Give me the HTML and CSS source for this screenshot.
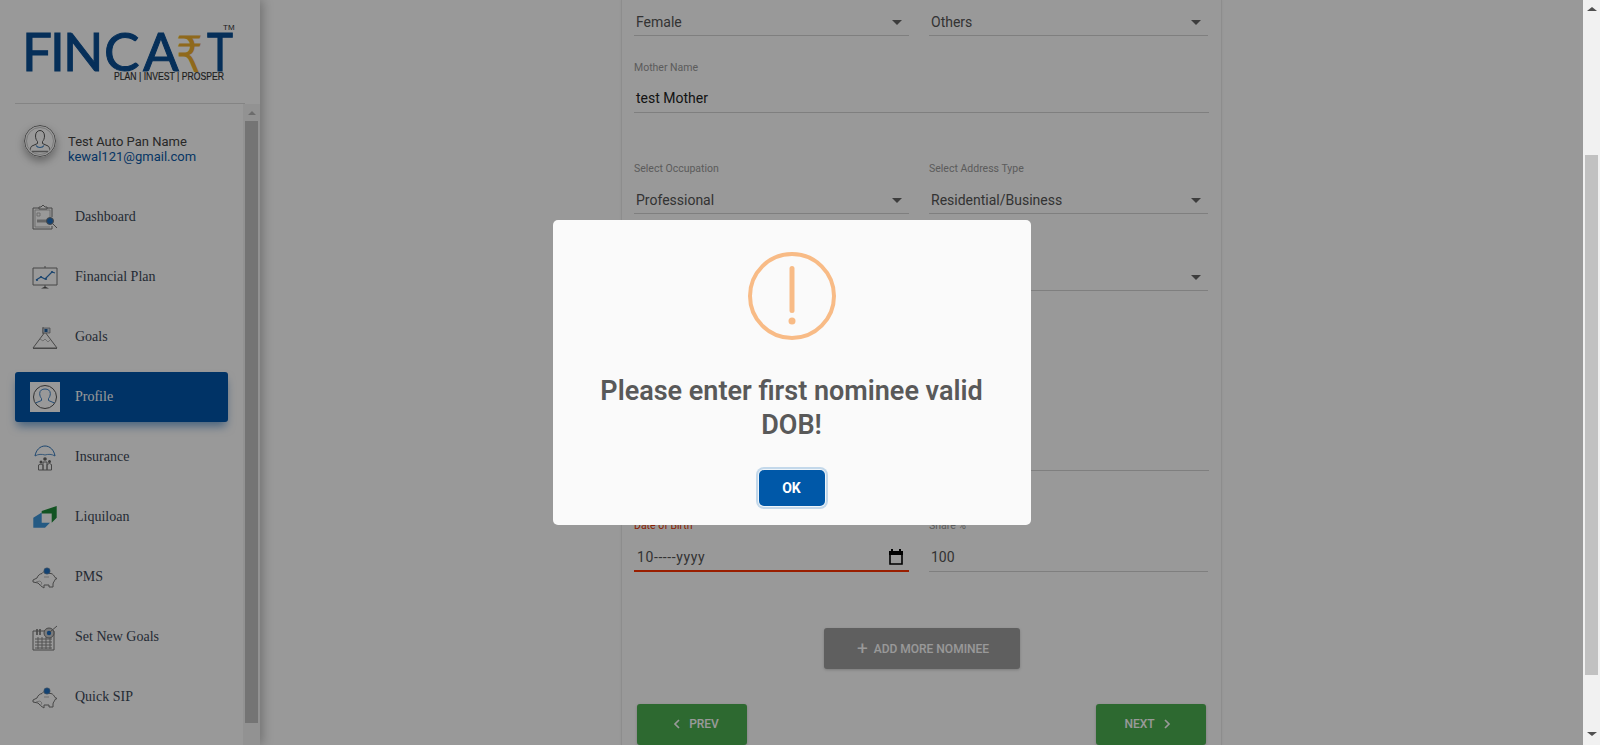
FILE: index.html
```html
<!DOCTYPE html>
<html lang="en">
<head>
<meta charset="utf-8">
<title>Fincart Profile</title>
<link rel="stylesheet" href="styles.css">
</head>
<body>
<div class="page">
  <div class="viewport">
    <aside class="sidebar">
      <div class="logo">
        <svg class="logo-svg" width="230" height="70" viewBox="0 0 230 70">
          <text class="logo-main" y="56" x="7 35 48 89 128">FINCA</text>
          <text class="logo-rupee" x="161" y="57" textLength="27" lengthAdjust="spacingAndGlyphs">₹</text>
          <text class="logo-main" x="192" y="56" textLength="26" lengthAdjust="spacingAndGlyphs">T</text>
          <text class="logo-tm" x="208" y="15">TM</text>
          <text class="logo-tag" x="99" y="65" textLength="110" lengthAdjust="spacingAndGlyphs">PLAN | INVEST | PROSPER</text>
        </svg>
      </div>
      <div class="side-body">
        <div class="side-content">
          <div class="user">
            <svg class="avatar" width="32" height="32" viewBox="0 0 32 32">
              <circle cx="16" cy="16" r="15.5" fill="#fff" stroke="#777"/>
              <circle cx="16" cy="16" r="13.5" fill="none" stroke="#aaa" stroke-width=".6"/>
              <path d="M11.500 11c0-3.400 2-5.500 4.500-5.500s4.500 2.100 4.500 5.500c0 2.500-1 4.500-2 5.500v2l5.500 2.500c1.200.6 1.500 2 1.500 3.500M11.500 11c0 2.500 1 4.500 2 5.500v2L8 21c-1.200.6-1.500 2-1.500 3.500" fill="none" stroke="#555"/>
              <path d="M12 20.500c1 1.500 2.500 2 4 2s3-.5 4-2" fill="none" stroke="#3b82c4" stroke-width="1.200"/>
              <path d="M8 26.500h16" stroke="#888" stroke-width="1.500"/>
            </svg>
            <div class="user-text">
              <div class="user-name">Test Auto Pan Name</div>
              <div class="user-mail">kewal121@gmail.com</div>
            </div>
          </div>
          <nav class="menu">
            <a class="item">
              <svg class="ico" viewBox="0 0 30 30"><path d="M3 6h6M17 6h5v9M3 6v21h19v-3" class="s"/><path d="M5 8h15v7M5 8v17h15" class="t"/><path d="M9 7V5h2l2-2 2 2h2v2z" class="s"/><path d="M7 11h3v3H7z" class="t"/><path d="M7 19h10" stroke="#aaa" stroke-width="3"/><circle cx="20" cy="19" r="3.500" fill="#1f6fc0" stroke="#777"/><path d="M23 22l4 4" class="s" stroke-width="1.600"/></svg>
              <span>Dashboard</span>
            </a>
            <a class="item">
              <svg class="ico" viewBox="0 0 30 30"><path d="M3 6h24v17H3z" class="s" stroke-width="1.200"/><path d="M15 4v2M15 23v2" class="s"/><path d="M11 26.500l4-2 4 2z" fill="#555"/><path d="M6 18l5-3 4 2 7-7 3 1" fill="none" stroke="#2f75ba" stroke-width="1.100"/><circle cx="7" cy="18" r="1.100" fill="#2f75ba"/><circle cx="11" cy="15" r="1.100" fill="#2f75ba"/><circle cx="16" cy="17" r="1.100" fill="#2f75ba"/><circle cx="22" cy="10" r="1.100" fill="#2f75ba"/></svg>
              <span>Financial Plan</span>
            </a>
            <a class="item">
              <svg class="ico" viewBox="0 0 30 30"><path d="M3 26L15 10l12 16z" class="s"/><path d="M3 26.500h24" class="s" stroke-width="1.200"/><path d="M10 17l3 2 2-2 3 3 2-2" class="t"/><path d="M13 12V5" class="s"/><path d="M13 6h7v5h-7z" fill="#cfd8e3" stroke="#777" stroke-width=".7"/><path d="M14.500 7h3v3h-3z" fill="#1f5f9e"/></svg>
              <span>Goals</span>
            </a>
            <a class="item active">
              <svg class="ico" viewBox="0 0 30 30"><rect width="30" height="30" fill="#fff"/><circle cx="15" cy="15" r="11.500" fill="none" stroke="#555"/><path d="M5.500 21l6-2.500v-2c-1-1-1.800-3-1.800-5 0-3 2.300-4.500 5.300-4.500s5.300 1.500 5.300 4.500c0 2-.8 4-1.800 5v2l6 2.500" fill="none" stroke="#3d80c4"/></svg>
              <span>Profile</span>
            </a>
            <a class="item">
              <svg class="ico" viewBox="0 0 30 30"><path d="M5 14C6 8 10 4 15 4s9 4 10 10" fill="none" stroke="#2f75ba"/><path d="M5 14c3-2 7-2 10-1 3-1 7-1 10 1" fill="none" stroke="#2f75ba" stroke-width=".8"/><circle cx="15" cy="17" r="1.800" fill="#666"/><circle cx="11" cy="20" r="1.500" fill="#666"/><circle cx="19.500" cy="19.500" r="1.500" fill="#666"/><path d="M8.500 28v-5l2.500-1 2 1v5zM13 28v-8h4v8zM17 28v-5.500l2.500-1 2 1V28z" class="s"/></svg>
              <span>Insurance</span>
            </a>
            <a class="item">
              <svg class="ico" viewBox="0 0 30 30"><path d="M3.300 15.700l8.400-5.200v10.200H20l-5 5H3.300z" fill="#3f97db"/><path d="M11.700 9l15-5v11.700l-5 5v-9.200h-10z" fill="#1f8a3a"/></svg>
              <span>Liquiloan</span>
            </a>
            <a class="item">
              <svg class="ico" viewBox="0 0 30 30"><path d="M3 18l4-2c1-3 3-4 5-4.500l2-2 1 2h6c2 .5 3 2 4 4l2 1-2 1c-.5 2-2 3-2 4.500V25h-4v-2h-5v3l-3-2-3-3-5-1z" class="s"/><path d="M6 20l4-1 2 2-2 3M14 15h5" class="t"/><circle cx="17" cy="9" r="3.200" fill="#1f6fc0" stroke="#999" stroke-width=".5"/></svg>
              <span>PMS</span>
            </a>
            <a class="item">
              <svg class="ico" viewBox="0 0 30 30"><path d="M3 9h21v19H3z" class="s" stroke-width="1.500"/><path d="M5 17h17M5 20h17M5 23h17M5 26h17M8 15v12M12 15v12M16 15v12M20 15v12" stroke="#888" stroke-width="1"/><path d="M7 7v6M10 7v6" stroke="#777" stroke-width="1.600"/><circle cx="19" cy="11" r="5" fill="#ccc" stroke="#777"/><circle cx="19" cy="11" r="2.200" fill="#1f6fc0"/><path d="M20 10l7-6" class="s" stroke-width="1.200"/></svg>
              <span>Set New Goals</span>
            </a>
            <a class="item">
              <svg class="ico" viewBox="0 0 30 30"><path d="M3 18l4-2c1-3 3-4 5-4.500l2-2 1 2h6c2 .5 3 2 4 4l2 1-2 1c-.5 2-2 3-2 4.500V25h-4v-2h-5v3l-3-2-3-3-5-1z" class="s"/><path d="M6 20l4-1 2 2-2 3M14 15h5" class="t"/><circle cx="17" cy="9" r="3.200" fill="#1f6fc0" stroke="#999" stroke-width=".5"/></svg>
              <span>Quick SIP</span>
            </a>
          </nav>
        </div>
        <div class="side-scroll">
          <div class="arrow-up-small"></div>
          <div class="side-thumb"></div>
        </div>
      </div>
    </aside>
    <main class="main">
      <section class="card">
        <div class="row row-2 gap-sm">
          <div class="field"><div class="value">Female<i class="caret"></i></div></div>
          <div class="field"><div class="value">Others<i class="caret"></i></div></div>
        </div>
        <div class="row gap-lg">
          <div class="field"><label class="lbl">Mother Name</label><div class="value dark">test Mother</div></div>
        </div>
        <div class="row row-2 gap-sm">
          <div class="field"><label class="lbl">Select Occupation</label><div class="value">Professional<i class="caret"></i></div></div>
          <div class="field"><label class="lbl">Select Address Type</label><div class="value">Residential/Business<i class="caret"></i></div></div>
        </div>
        <div class="row row-2 gap-xl">
          <div class="field"><label class="lbl">&nbsp;</label><div class="value">&nbsp;<i class="caret"></i></div></div>
          <div class="field"><label class="lbl">&nbsp;</label><div class="value">&nbsp;<i class="caret"></i></div></div>
        </div>
        <div class="row gap-md">
          <div class="field"><label class="lbl">&nbsp;</label><div class="value">&nbsp;</div></div>
        </div>
        <div class="row row-2">
          <div class="field invalid"><label class="lbl">Date of Birth</label><div class="value date">10-----yyyy
            <svg class="cal" width="14" height="16" viewBox="0 0 14 16"><path d="M3 0v2M11 0v2" stroke="#000" stroke-width="2"/><path d="M1 3.500h12v11.500H1z" fill="none" stroke="#000" stroke-width="1.600"/><path d="M0 2h14v4H0z" fill="#000"/></svg>
          </div></div>
          <div class="field"><label class="lbl">Share %</label><div class="value">100</div></div>
        </div>
        <div class="add-wrap">
          <button class="btn btn-grey"><span class="plus">+</span>ADD MORE NOMINEE</button>
        </div>
        <div class="nav-row">
          <button class="btn btn-green btn-prev"><svg class="chev" width="7" height="10" viewBox="0 0 7 10"><path d="M6 1L2 5l4 4" fill="none" stroke="#fff" stroke-width="1.700"/></svg>PREV</button>
          <button class="btn btn-green btn-next">NEXT<svg class="chev chev-r" width="7" height="10" viewBox="0 0 7 10"><path d="M1 1l4 4-4 4" fill="none" stroke="#fff" stroke-width="1.700"/></svg></button>
        </div>
      </section>
    </main>
    <div class="overlay">
      <div class="modal">
        <svg class="warn" width="88" height="88" viewBox="0 0 88 88">
          <circle cx="44" cy="44" r="42" fill="none" stroke="#f8bb86" stroke-width="4"/>
          <rect x="41.500" y="14" width="5" height="47" rx="2.500" fill="#f8bb86"/>
          <circle cx="44" cy="69" r="3.500" fill="#f8bb86"/>
        </svg>
        <h2 class="modal-title">Please enter first nominee valid DOB!</h2>
        <button class="ok">OK</button>
      </div>
    </div>
  </div>
  <div class="page-scroll">
    <div class="tri-up"></div>
    <div class="page-thumb"></div>
    <div class="tri-down"></div>
  </div>
</div>
</body>
</html>
```
FILE: styles.css
```css
* { box-sizing: border-box; }
html, body { margin: 0; height: 100%; overflow: hidden; background: #fff; }
body { font-family: Roboto, "Liberation Sans", sans-serif; }

.page { display: flex; width: 1600px; height: 745px; }
.viewport { position: relative; flex: 1; display: flex; min-width: 0; }

/* sidebar */
.sidebar {
  width: 260px; flex: none; height: 745px; display: flex; flex-direction: column;
  background: #fff; box-shadow: 3px 0 10px rgba(0,0,0,.25); position: relative; z-index: 1;
}
.logo { height: 104px; margin: 0 15px; border-bottom: 1px solid #dcdcdc; padding: 15px 0 0; }
.logo-svg { display: block; }
.logo-main { font-family: Lato, sans-serif; font-size: 53px; fill: #0a4f94; stroke: #0a4f94; stroke-width: 1px; }
.logo-rupee { font-family: "DejaVu Sans", sans-serif; font-size: 50px; fill: #efb02f; }
.logo-tm { font-family: "Liberation Sans", sans-serif; font-size: 8px; fill: #333; }
.logo-tag { font-family: "Liberation Sans", sans-serif; font-size: 11px; fill: #333; stroke: #333; stroke-width: .2px; }

.side-body { flex: 1; display: flex; min-height: 0; }
.side-content { flex: 1; padding-left: 15px; min-width: 0; }
.user { display: flex; align-items: flex-start; height: 37px; margin-top: 18px; padding-left: 9px; gap: 12px; }
.avatar { flex: none; margin-top: 3px; border-radius: 50%; box-shadow: 0 4px 8px rgba(0,0,0,.35); }
.user-text { margin-top: 12px; font-size: 13px; line-height: 15px; white-space: nowrap; }
.user-name { color: #444; }
.user-mail { color: #0a5aa8; }

.menu { display: flex; flex-direction: column; gap: 10px; margin-top: 33px; width: 213px; }
.item {
  display: flex; align-items: center; gap: 15px; height: 50px; padding-left: 15px; border-radius: 3px;
  font-family: "Liberation Serif", serif; font-size: 14px; color: #3c4858;
}
.item.active { background: #0055aa; color: #fff; box-shadow: 0 6px 10px -2px rgba(0,85,170,.55); }
.ico { width: 30px; height: 30px; flex: none; }
.s { fill: none; stroke: #777; stroke-width: 1; }
.t { fill: none; stroke: #aaa; stroke-width: .8; }

.side-scroll { width: 17px; flex: none; background: #f4f4f4; padding: 0 2px; display: flex; flex-direction: column; }
.arrow-up-small { height: 17px; display: flex; align-items: center; justify-content: center; }
.arrow-up-small::before { content: ""; border: 4px solid transparent; border-top: 0; border-bottom: 4px solid #b5b5b5; }
.side-thumb { height: 602px; background: #c1c1c1; }

/* main */
.main { flex: 1; display: flex; justify-content: center; min-width: 0; }
.card {
  width: 601px; height: 745px; overflow: hidden; padding: 9px 12px 0;
  border-left: 1px solid #ececec; border-right: 1px solid #ececec;
  box-shadow: 0 0 3px rgba(0,0,0,.06);
}
.row { display: block; }
.row-2 { display: grid; grid-template-columns: 275px 279px; column-gap: 20px; }
.gap-sm { margin-bottom: 24px; }
.gap-md { margin-bottom: 47px; }
.gap-lg { margin-bottom: 48px; }
.gap-xl { margin-bottom: 127px; }
.field { border-bottom: 1px solid #d4d4d4; }
.field.invalid { border-bottom: 2px solid #ff3300; }
.lbl { display: block; height: 15px; margin-bottom: 11px; padding-top: 1px; font-size: 10.500px; line-height: 14px; color: #999; }
.invalid .lbl { color: #e53500; }
.value { position: relative; height: 26px; padding-left: 2px; font-size: 14px; line-height: 26px; color: #555; }
.dark { color: #222; line-height: 24px; }
.date { padding-left: 3px; letter-spacing: .6px; }
.caret { position: absolute; right: 7px; top: 11px; border: 5px solid transparent; border-top: 5px solid #666; border-bottom: 0; }
.cal { position: absolute; right: 6px; top: 5px; }

.btn {
  display: flex; align-items: center; justify-content: center; height: 41px; border: 0; border-radius: 3px; color: #fff;
  font-family: Roboto, sans-serif; font-size: 12px; font-weight: 500;
  box-shadow: 0 1px 3px rgba(0,0,0,.2);
}
.add-wrap { display: flex; justify-content: center; margin-top: 56px; }
.btn-grey { width: 196px; background: #9e9e9e; padding-left: 9px; }
.plus { font-size: 19px; font-weight: 400; line-height: 1; margin-right: 6px; }
.nav-row { display: flex; justify-content: space-between; margin-top: 35px; padding: 0 3px; }
.btn-green { width: 110px; background: #4caf50; }
.btn-prev { padding: 0 0 2px 8px; }
.btn-next { padding: 0 7px 2px 0; }
.chev { margin-right: 9px; }
.chev-r { margin: 0 0 0 9px; }

/* overlay */
.overlay {
  position: absolute; inset: 0; z-index: 5; background: rgba(0,0,0,.4);
  display: flex; align-items: center; justify-content: center;
}
.modal {
  width: 478px; height: 305px; background: #fafafa; border-radius: 5px;
  display: flex; flex-direction: column; align-items: center; padding-top: 32px;
}
.warn { flex: none; display: block; }
.modal-title {
  margin: 34px 0 0; width: 420px; text-align: center; font-size: 27px; font-weight: 600;
  line-height: 34px; color: #595959;
}
.ok {
  margin-top: 28px; width: 66px; height: 36px; border: 0; border-radius: 5px; background: #0058a8; color: #fff;
  font-family: Roboto, sans-serif; font-size: 14px; font-weight: 700;
  box-shadow: 0 0 0 1px #eef4f9, 0 0 0 3px #c3d8ea;
}

/* page scrollbar */
.page-scroll { position: relative; width: 17px; flex: none; background: #f1f1f1; display: flex; flex-direction: column; align-items: center; }
.tri-up { margin-top: 7px; border: 5px solid transparent; border-top: 0; border-bottom: 4px solid #505050; }
.page-thumb { margin-top: 144px; width: 13px; height: 520px; background: #c1c1c1; }
.tri-down { margin-top: 57px; border: 5px solid transparent; border-bottom: 0; border-top: 4px solid #505050; }
```
